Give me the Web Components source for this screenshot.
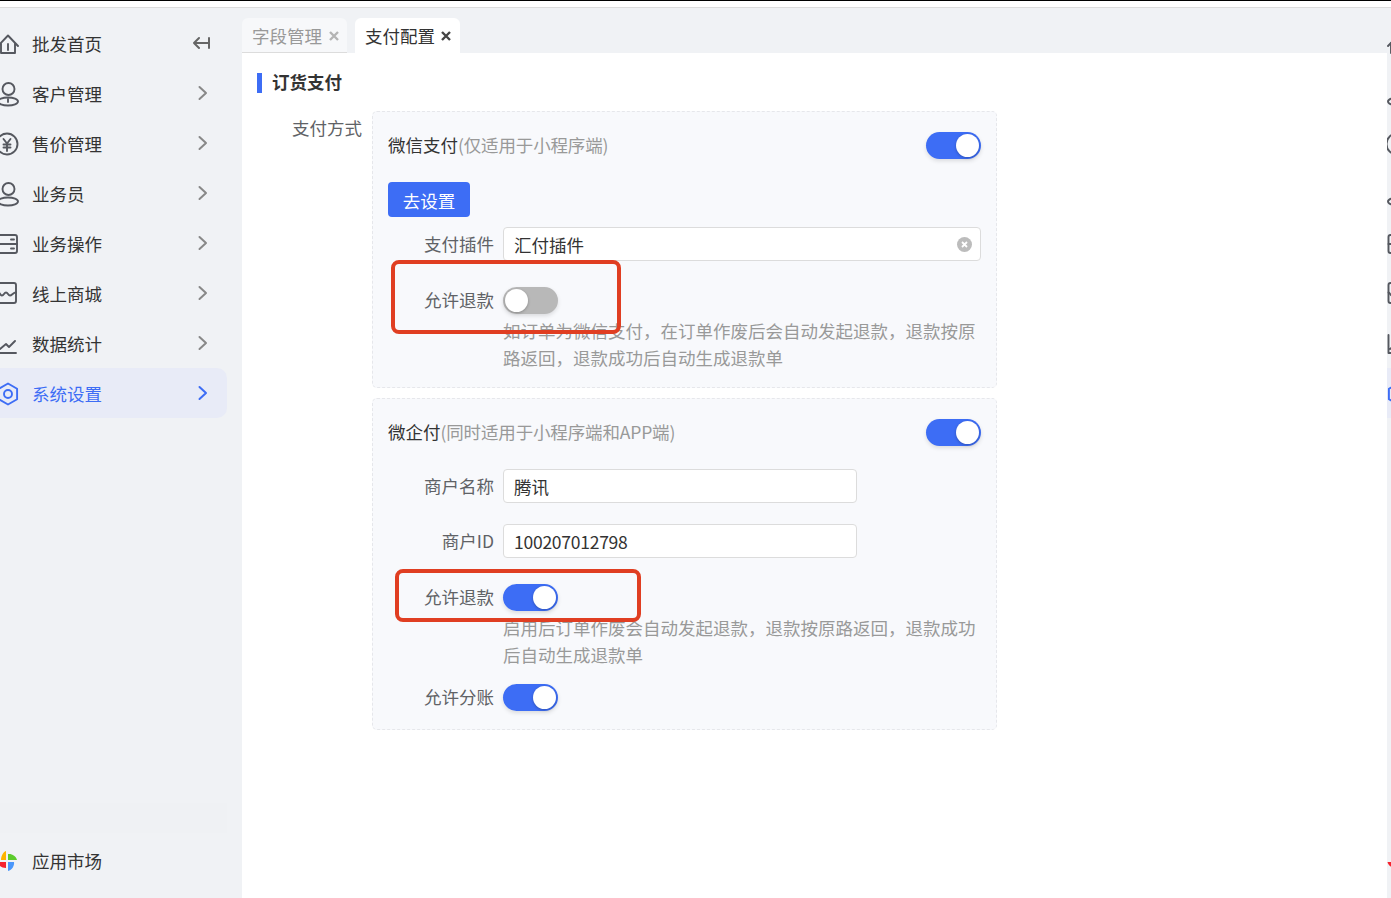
<!DOCTYPE html>
<html lang="zh-CN">
<head>
<meta charset="utf-8">
<title>支付配置</title>
<style>
    html, body { margin: 0; height: 100%; overflow: hidden; }
    body { font: 17.5px "Noto Sans CJK SC", "Noto Sans", sans-serif; color: #333; }
</style>
</head>
<body>
<app-shell>
    <side-nav slot="nav">
        <nav-item icon="house" label="批发首页" arrow="collapse"></nav-item>
        <nav-item icon="customer" label="客户管理"></nav-item>
        <nav-item icon="yen" label="售价管理"></nav-item>
        <nav-item icon="person" label="业务员"></nav-item>
        <nav-item icon="wallet" label="业务操作"></nav-item>
        <nav-item icon="shop" label="线上商城"></nav-item>
        <nav-item icon="chart" label="数据统计"></nav-item>
        <nav-item icon="gear" label="系统设置" active></nav-item>
        <nav-item slot="foot" icon="market" label="应用市场" arrow="none"></nav-item>
    </side-nav>

    <tab-bar slot="tabs">
        <tab-item>字段管理</tab-item>
        <tab-item current>支付配置</tab-item>
    </tab-bar>

    <section-title slot="body">订货支付</section-title>
    <form-block slot="body" label="支付方式">
        <pay-card>
            <span slot="name">微信支付</span>
            <span slot="hint">(仅适用于小程序端)</span>
            <go-button>去设置</go-button>
            <form-row label="支付插件" top="10"><text-field value="汇付插件" clearable></text-field></form-row>
            <form-row label="允许退款" top="26"><toggle-switch></toggle-switch></form-row>
            <note-text>如订单为微信支付，在订单作废后会自动发起退款，退款按原路返回，退款成功后自动生成退款单</note-text>
        </pay-card>
        <pay-card>
            <span slot="name">微企付</span>
            <span slot="hint">(同时适用于小程序端和APP端)</span>
            <form-row label="商户名称" top="23"><text-field value="腾讯" short></text-field></form-row>
            <form-row label="商户ID" top="21"><text-field value="100207012798" short></text-field></form-row>
            <form-row label="允许退款" top="26"><toggle-switch on></toggle-switch></form-row>
            <note-text>启用后订单作废会自动发起退款，退款按原路返回，退款成功后自动生成退款单</note-text>
            <form-row label="允许分账" top="16" style="margin-bottom:2px"><toggle-switch on></toggle-switch></form-row>
        </pay-card>
    </form-block>

    <icon-rail slot="rail"></icon-rail>

    <mark-box slot="marks" style="left:391px;top:252px;width:222px;height:66px"></mark-box>
    <mark-box slot="marks" style="left:395px;top:561px;width:238px;height:45px"></mark-box>
</app-shell>

<script>
const ICONS = {
    house: '<path d="M4 15 14 4.5 24 15M7 12.5V22H21V12.5M14 13V19"/>',
    customer: '<circle cx="14.5" cy="8" r="6"/><ellipse cx="14" cy="20.5" rx="10" ry="4"/><path d="M14 18V21"/>',
    person: '<circle cx="14.5" cy="8" r="6"/><ellipse cx="14" cy="20.5" rx="10" ry="4"/>',
    yen: '<circle cx="13" cy="13" r="10.5"/><path d="M9.5 8 13 12.5 16.5 8M9.5 13.5H16.5M9.5 16.5H16.5M13 12.5V20"/>',
    wallet: '<rect x="4.5" y="4" width="18.5" height="18" rx="2"/><path d="M4.5 13H23M17 8.5H20M17 17.5H20"/>',
    shop: '<rect x="4.5" y="2" width="17.5" height="20" rx="2"/><path d="M4.5 11.5C6 11.5 6 14.5 8 14.5S10 11.5 12 11.5 14 14.5 16 14.5 19 11.5 22 11.5"/>',
    chart: '<path d="M4.5 4V22H22M6 18 12 13 15 16 21 10"/>',
    gear: '<path d="M14 2.5 23.1 7.75V18.25L14 23.5 4.9 18.25V7.75Z"/><circle cx="14" cy="13" r="4"/>',
    market: '<g stroke="none"><path fill="#fdb400" d="M12 12V3C9 4 7 8 7 12Z"/><path fill="#5ccb2c" d="M14 12V6C18 5.5 22 8 23 12Z"/><path fill="#4a97fb" d="M14 14H20C20.5 18 18 22 14 23Z"/><path fill="#f5222d" d="M12 14H3.5C4 17 7 20 12 20Z"/></g>'
};

function iconSvg(name) {
    return `<svg viewBox="0 0 26 26" width="26" height="26" fill="none" stroke="currentColor" stroke-width="1.9" stroke-linejoin="round" stroke-linecap="round">${ICONS[name]}</svg>`;
}

// every element below is only markup + style, so a small base class is enough
class Plain extends HTMLElement {
    constructor() {
        super();
        this.attachShadow({ mode: 'open' });
    }
    connectedCallback() {
        this.shadowRoot.innerHTML = this.render();
    }
}

class AppShell extends Plain {
    render() {
        return `
            <style>
                :host { display: flex; flex-direction: column; position: relative; height: 100vh; background: #f0f2f5; overflow: hidden; }
                .rule { flex: none; height: 7px; background: linear-gradient(#000 1px, #fff 1px); border-bottom: 1px solid #dcdcdc; }
                .frame { flex: 1; min-height: 0; display: flex; position: relative; }
                .nav { flex: none; width: 242px; display: flex; }
                .main { flex: 1; min-width: 0; display: flex; flex-direction: column; }
                .page { flex: 1; background: #fff; padding-top: 20px; }
                .rail { flex: none; width: 4px; display: flex; }
            </style>
            <div class="rule"></div>
            <div class="frame">
                <div class="nav"><slot name="nav"></slot></div>
                <div class="main">
                    <slot name="tabs"></slot>
                    <div class="page"><slot name="body"></slot></div>
                </div>
                <div class="rail"><slot name="rail"></slot></div>
                <slot name="marks"></slot>
            </div>
        `;
    }
}

class SideNav extends Plain {
    render() {
        return `
            <style>
                :host { display: flex; flex-direction: column; flex: 1; min-width: 0; padding: 10px 15px 13px 0; overflow: hidden; }
                .fill { flex: 1; display: flex; flex-direction: column; justify-content: flex-end; }
                .band { height: 30px; margin-bottom: 2px; background: #eff1f4; }
            </style>
            <slot></slot>
            <div class="fill"><div class="band"></div></div>
            <slot name="foot"></slot>
        `;
    }
}

class NavItem extends Plain {
    render() {
        const arrow = this.getAttribute('arrow') || 'chevron';
        let tail = '';
        if (arrow === 'chevron') {
            tail = '<svg class="tail" viewBox="0 0 16 20" width="16" height="20"><path d="M4.5 4 11 10 4.5 16"/></svg>';
        } else if (arrow === 'collapse') {
            tail = '<svg class="tail back" viewBox="0 0 18 16" width="18" height="16"><path d="M1 8H15M6 3 1 8 6 13M16 3V13"/></svg>';
        }
        return `
            <style>
                :host { display: flex; align-items: center; height: 50px; border-radius: 0 10px 10px 0; color: #55585f; }
                :host([active]) { background: #e8ebf7; color: #3d6df5; }
                .icon { flex: none; display: flex; margin: 2px 12px 0 -6px; }
                .label { flex: 1; color: #333; white-space: nowrap; }
                :host([active]) .label { color: #3d6df5; }
                .tail { flex: none; margin-right: 16px; fill: none; stroke: #888; stroke-width: 2; stroke-linecap: round; stroke-linejoin: round; }
                :host([active]) .tail { stroke: #3d6df5; }
                .back { stroke: #666; }
            </style>
            <span class="icon">${iconSvg(this.getAttribute('icon'))}</span>
            <span class="label">${this.getAttribute('label')}</span>
            ${tail}
        `;
    }
}

class IconRail extends Plain {
    render() {
        const names = ['house', 'customer', 'yen', 'person', 'wallet', 'shop', 'chart', 'gear'];
        const rows = names.map((n) => `<div class="row${n === 'gear' ? ' on' : ''}">${iconSvg(n)}</div>`).join('');
        return `
            <style>
                :host { display: flex; flex-direction: column; flex: 1; padding: 10px 0 13px; overflow: hidden; color: #55585f; }
                .row { flex: none; height: 50px; display: flex; align-items: center; }
                .row svg { flex: none; margin: 2px 0 0 -3px; }
                .on { background: #e8ebf7; color: #3d6df5; }
                .fill { flex: 1; }
            </style>
            ${rows}
            <div class="fill"></div>
            <div class="row">${iconSvg('market')}</div>
        `;
    }
}

class TabBar extends Plain {
    render() {
        return `
            <style>
                :host { display: flex; flex: none; align-items: flex-end; gap: 8px; height: 45px; }
            </style>
            <slot></slot>
        `;
    }
}

class TabItem extends Plain {
    render() {
        return `
            <style>
                :host { display: flex; align-items: center; box-sizing: border-box; width: 105px; height: 35px; padding: 0 8px 0 10px; gap: 7px; border-radius: 6px 6px 0 0; background: #f7f8fa; border-bottom: 1px solid #dcdcdc; color: #999; white-space: nowrap; }
                :host([current]) { gap: 6px; background: #fff; border-bottom-color: #fff; color: #333; }
                svg { flex: none; margin-top: 1px; stroke: #b4b4b4; stroke-width: 2.4; }
                :host([current]) svg { stroke: #444; }
            </style>
            <slot></slot>
            <svg viewBox="0 0 10 10" width="10" height="10"><path d="M1 1 9 9M9 1 1 9"/></svg>
        `;
    }
}

class SectionTitle extends Plain {
    render() {
        return `
            <style>
                :host { display: flex; align-items: center; height: 20px; margin-left: 15px; gap: 10px; font-weight: 700; color: #333; }
                i { flex: none; width: 5px; height: 20px; background: #3d6df5; }
                span { margin-top: -4px; }
            </style>
            <i></i><span><slot></slot></span>
        `;
    }
}

class FormBlock extends Plain {
    render() {
        return `
            <style>
                :host { display: flex; margin-top: 18px; gap: 10px; }
                .label { flex: none; width: 120px; margin-top: 5px; line-height: 24px; text-align: right; color: #606266; }
                .cards { flex: none; width: 625px; display: flex; flex-direction: column; gap: 10px; }
            </style>
            <div class="label">${this.getAttribute('label')}</div>
            <div class="cards"><slot></slot></div>
        `;
    }
}

class PayCard extends Plain {
    render() {
        return `
            <style>
                :host { display: block; box-sizing: border-box; padding: 20px 15px 16px; border: 1px dashed #e6e7eb; border-radius: 5px; background: #f8f9fc; }
                .head { display: flex; align-items: center; height: 27px; }
                .head ::slotted([slot="name"]) { margin-top: -2px; color: #333; }
                .head ::slotted([slot="hint"]) { flex: 1; margin-top: -2px; letter-spacing: -.15px; color: #999; }
            </style>
            <div class="head">
                <slot name="name"></slot><slot name="hint"></slot>
                <toggle-switch on></toggle-switch>
            </div>
            <slot></slot>
        `;
    }
}

class GoButton extends Plain {
    render() {
        return `
            <style>
                :host { display: flex; align-items: center; justify-content: center; box-sizing: border-box; width: 82px; height: 35px; margin-top: 23px; padding-top: 2px; border-radius: 4px; background: #3d6df5; color: #fff; }
            </style>
            <slot></slot>
        `;
    }
}

class FormRow extends Plain {
    render() {
        return `
            <style>
                :host { display: flex; align-items: center; gap: 9px; margin-top: ${this.getAttribute('top') || 0}px; }
                .label { flex: none; width: 106px; margin-top: -2px; text-align: right; color: #606266; white-space: nowrap; }
            </style>
            <div class="label">${this.getAttribute('label')}</div>
            <slot></slot>
        `;
    }
}

class TextField extends Plain {
    render() {
        const clear = this.hasAttribute('clearable')
            ? '<svg viewBox="0 0 15 15" width="15" height="15"><circle cx="7.5" cy="7.5" r="7.5" fill="#bcbcbc"/><path d="M5 5 10 10M10 5 5 10" stroke="#fff" stroke-width="1.8"/></svg>'
            : '';
        const value = this.getAttribute('value');
        const digits = /^\d+$/.test(value) ? ' style="letter-spacing:-.25px"' : '';
        return `
            <style>
                :host { display: flex; flex: 1; align-items: center; box-sizing: border-box; height: 34px; padding: 0 8px 0 10px; border: 1px solid #dcdcdc; border-radius: 4px; background: #fff; color: #333; }
                :host([short]) { flex: none; width: 354px; }
                span { flex: 1; }
            </style>
            <span${digits}>${value}</span>${clear}
        `;
    }
}

class ToggleSwitch extends Plain {
    render() {
        return `
            <style>
                :host { display: flex; flex: none; box-sizing: border-box; width: 55px; height: 27px; padding: 2px; border-radius: 14px; background: #b8b8b8; box-shadow: 0 2px 4px rgba(0,0,0,.12); }
                :host([on]) { justify-content: flex-end; background: #3d6df5; }
                i { width: 23px; height: 23px; border-radius: 50%; background: #fff; box-shadow: 0 1px 3px rgba(0,0,0,.25); }
            </style>
            <i></i>
        `;
    }
}

class NoteText extends Plain {
    render() {
        return `
            <style>
                :host { display: block; margin: 3px 0 0 115px; line-height: 27px; color: #999; }
            </style>
            <slot></slot>
        `;
    }
}

class MarkBox extends Plain {
    render() {
        return `
            <style>
                :host { display: block; position: absolute; box-sizing: content-box; border: 4px solid #e03e22; border-radius: 8px; pointer-events: none; }
            </style>
        `;
    }
}

customElements.define('app-shell', AppShell);
customElements.define('side-nav', SideNav);
customElements.define('nav-item', NavItem);
customElements.define('icon-rail', IconRail);
customElements.define('tab-bar', TabBar);
customElements.define('tab-item', TabItem);
customElements.define('section-title', SectionTitle);
customElements.define('form-block', FormBlock);
customElements.define('pay-card', PayCard);
customElements.define('go-button', GoButton);
customElements.define('form-row', FormRow);
customElements.define('text-field', TextField);
customElements.define('toggle-switch', ToggleSwitch);
customElements.define('note-text', NoteText);
customElements.define('mark-box', MarkBox);
</script>
</body>
</html>
